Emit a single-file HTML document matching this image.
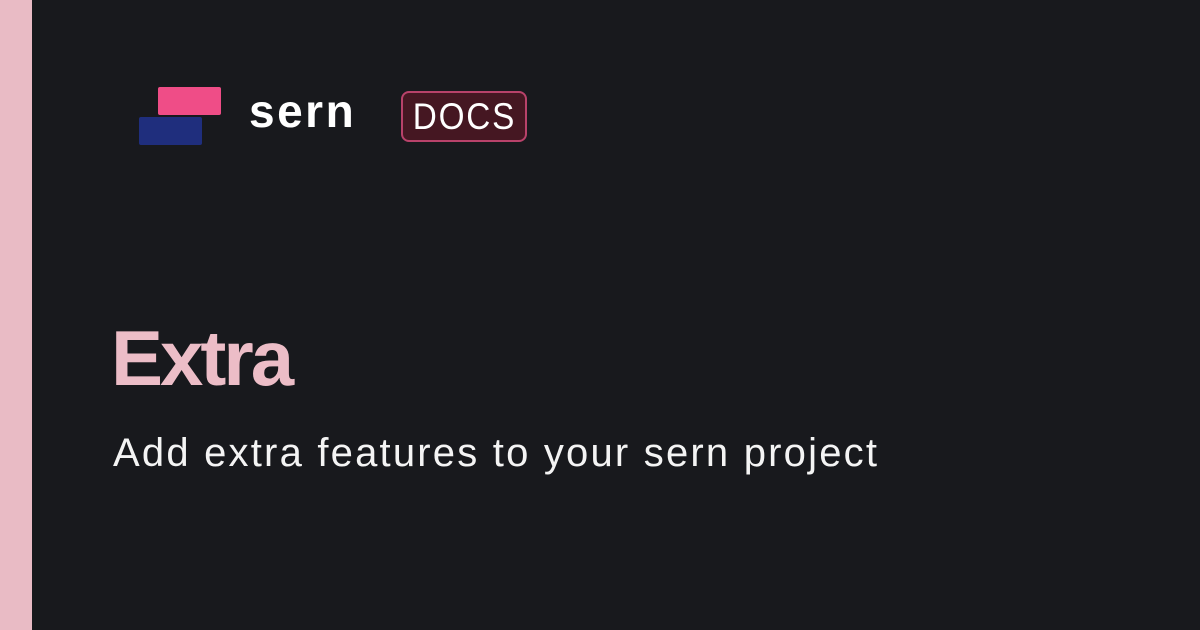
<!DOCTYPE html>
<html><head><style>
html,body{margin:0;padding:0}
body{width:1200px;height:630px;background:#18191d;position:relative;overflow:hidden;font-family:"Liberation Sans",sans-serif}
.bar{position:absolute;left:0;top:0;width:32px;height:630px;background:#e9bbc5}
.p{position:absolute;left:158px;top:87px;width:63px;height:28px;background:#ef4d87;border-radius:2px}
.b{position:absolute;left:139px;top:117px;width:63px;height:28px;background:#1f2e7d;border-radius:2px}
.sern{position:absolute;left:249px;top:84px;font-size:46px;font-weight:bold;color:#fff;letter-spacing:2.5px}
.docs{position:absolute;left:401px;top:91px;width:122px;height:47px;border:2px solid #b8426a;border-radius:8px;background:#451722;color:#fff;font-size:37px;text-align:center;line-height:47px;letter-spacing:2px}
.docs span{display:inline-block;transform:scaleX(0.9)}
.t{position:absolute;left:111px;top:313px;font-size:78px;font-weight:bold;color:#ecbdc7;letter-spacing:-3px}
.s{position:absolute;left:113px;top:431px;font-size:40px;color:#f4f4f4;letter-spacing:2.2px}
</style></head><body>
<div class="bar"></div>
<div class="p"></div><div class="b"></div>
<div class="sern">sern</div>
<div class="docs"><span>DOCS</span></div>
<div class="t">Extra</div>
<div class="s">Add extra features to your sern project</div>
</body></html>
